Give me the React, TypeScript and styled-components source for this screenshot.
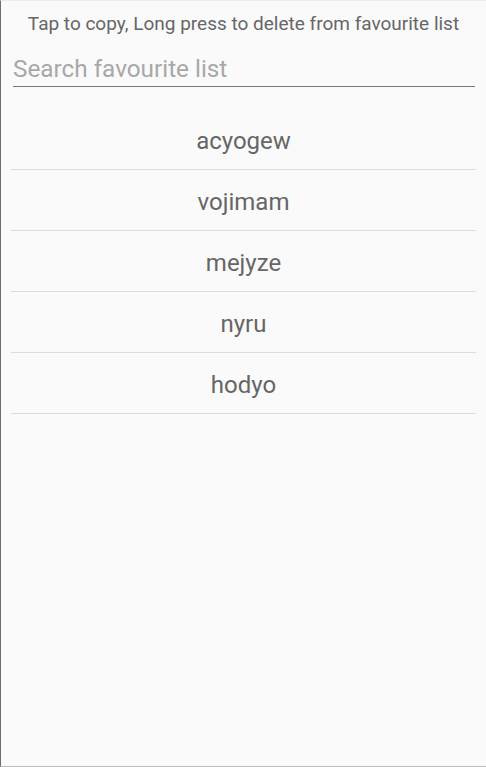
import React, { useState } from "react";
import styled, { createGlobalStyle } from "styled-components";

const GlobalStyle = createGlobalStyle`
  html, body {
    margin: 0;
    padding: 0;
    background: #fafafa;
  }
  * {
    box-sizing: border-box;
  }
`;

const Screen = styled.div`
  width: 486px;
  height: 767px;
  background-color: #fafafa;
  border-left: 1px solid #6e6e6e;
  border-top: 1px solid #e6eef0;
  border-bottom: 1px solid #bdbdbd;
  font-family: Roboto, "Noto Sans", sans-serif;
  display: flex;
  flex-direction: column;
  overflow: hidden;
`;

const Hint = styled.p`
  margin: 0;
  padding-top: 12px;
  font-size: 19px;
  line-height: 22px;
  color: #666;
  text-align: center;
`;

const SearchField = styled.input`
  margin: 19px 11px 0 12px;
  padding: 0 0 4px 0;
  border: none;
  border-bottom: 1px solid #7a7a7a;
  background: transparent;
  font-family: inherit;
  font-size: 24.3px;
  line-height: 28px;
  height: 33px;
  color: #555;
  outline: none;

  &::placeholder {
    color: #a8a8a8;
  }
`;

const List = styled.ul`
  list-style: none;
  margin: 22px 10px 0 10px;
  padding: 0;
`;

const Row = styled.li`
  height: 61px;
  display: flex;
  align-items: center;
  justify-content: center;
  border-bottom: 1px solid #dcdcdc;
  font-size: 24px;
  color: #666;
  cursor: pointer;
  padding-top: 4px;
`;

const favourites = ["acyogew", "vojimam", "mejyze", "nyru", "hodyo"];

const App = () => {
  const [query, setQuery] = useState("");

  const shown = favourites.filter((f) => f.includes(query.toLowerCase()));

  return (
    <>
      <GlobalStyle />
      <Screen>
        <Hint>Tap to copy, Long press to delete from favourite list</Hint>
        <SearchField
          placeholder="Search favourite list"
          value={query}
          onChange={(e) => setQuery(e.target.value)}
        />
        <List>
          {shown.map((name) => (
            <Row key={name}>{name}</Row>
          ))}
        </List>
      </Screen>
    </>
  );
};

export default App;
